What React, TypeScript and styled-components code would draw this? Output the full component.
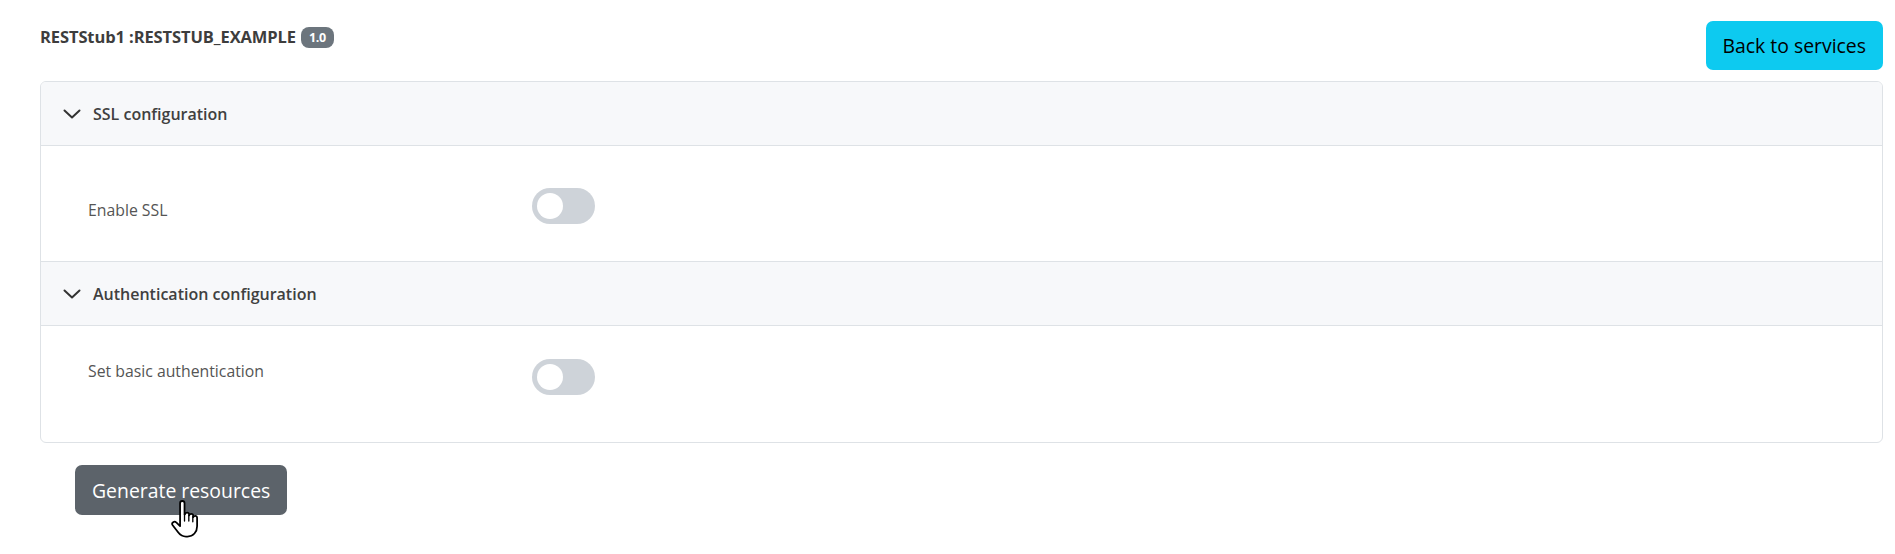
import styled, { createGlobalStyle } from "styled-components";

const GlobalStyle = createGlobalStyle`
  html, body {
    margin: 0;
    padding: 0;
    background: #ffffff;
  }
  body {
    font-family: "Open Sans", "Noto Sans", Arial, sans-serif;
    color: #444;
  }
`;

const Page = styled.div`
  width: 1895px;
  min-height: 554px;
  box-sizing: border-box;
  padding: 21px 12px 0 40px;
`;

const TopBar = styled.div`
  display: flex;
  justify-content: space-between;
  align-items: flex-start;
`;

const Title = styled.h1`
  display: flex;
  align-items: center;
  gap: 5px;
  margin: 4px 0 0 0;
  font-size: 16.5px;
  font-weight: 700;
  line-height: 22px;
  color: #3d3d3d;
  letter-spacing: -0.1px;
`;

const Badge = styled.span`
  display: inline-flex;
  align-items: center;
  justify-content: center;
  height: 21px;
  padding: 0 8px;
  border-radius: 8px;
  background: #6c757d;
  color: #ffffff;
  font-size: 12.5px;
  font-weight: 700;
  margin-top: 2px;
  letter-spacing: -0.3px;
`;

const Button = styled.button<{ $variant: "info" | "secondary" }>`
  display: inline-flex;
  align-items: center;
  justify-content: center;
  height: ${({ $variant }) => ($variant === "info" ? "49px" : "50px")};
  padding: 0 17px;
  border: none;
  border-radius: 7px;
  font-family: "Open Sans", "Noto Sans", Arial, sans-serif;
  font-size: 19.4px;
  font-weight: 400;
  cursor: pointer;
  background: ${({ $variant }) => ($variant === "info" ? "#0dcaf0" : "#5c636a")};
  color: ${({ $variant }) => ($variant === "info" ? "#000000" : "#ffffff")};
`;

const Card = styled.div`
  margin-top: 11px;
  border: 1px solid #dee2e6;
  border-radius: 6px;
  overflow: hidden;
`;

const SectionHeader = styled.div`
  display: flex;
  align-items: center;
  gap: 12px;
  height: 63px;
  padding-left: 22px;
  background: #f7f8fa;
  border-bottom: 1px solid #dee2e6;
  font-size: 16px;
  font-weight: 600;
  color: #404040;
`;

const SectionBody = styled.div<{ $align: "center" | "start"; $last?: boolean }>`
  display: grid;
  grid-template-columns: 444px 63px;
  align-items: ${({ $align }) => ($align === "center" ? "center" : "start")};
  height: 116px;
  box-sizing: border-box;
  padding: ${({ $align }) => ($align === "center" ? "4px 0 0 47px" : "33px 0 0 47px")};
  border-bottom: ${({ $last }) => ($last ? "none" : "1px solid #dee2e6")};
`;

const Label = styled.span<{ $offset?: number }>`
  font-size: 15.8px;
  font-weight: 400;
  color: #555;
  line-height: 24px;
  padding-top: ${({ $offset }) => $offset ?? 0}px;
`;

const Track = styled.span`
  position: relative;
  display: block;
  width: 63px;
  height: 36px;
  border-radius: 18px;
  background: #ced3d9;
`;

const Knob = styled.span`
  position: absolute;
  left: 5px;
  top: 5px;
  width: 26px;
  height: 26px;
  border-radius: 50%;
  background: #ffffff;
`;

const Footer = styled.div`
  position: relative;
  display: flex;
  padding: 22px 0 40px 35px;
`;

const Pointer = styled.svg`
  position: absolute;
  left: 131px;
  top: 58px;
  z-index: 2;
  pointer-events: none;
  overflow: visible;
`;

function Chevron() {
  return (
    <svg width="18" height="10" viewBox="0 0 18 10" fill="none">
      <polyline
        points="1.5 1.5 9 8.5 16.5 1.5"
        stroke="#333"
        strokeWidth="2"
        strokeLinecap="round"
        strokeLinejoin="round"
      />
    </svg>
  );
}

function Toggle() {
  return (
    <Track>
      <Knob />
    </Track>
  );
}

export default function App() {
  return (
    <>
      <GlobalStyle />
      <Page>
        <TopBar>
          <Title>
            RESTStub1 :RESTSTUB_EXAMPLE <Badge>1.0</Badge>
          </Title>
          <Button $variant="info">Back to services</Button>
        </TopBar>

        <Card>
          <SectionHeader>
            <Chevron />
            SSL configuration
          </SectionHeader>
          <SectionBody $align="center">
            <Label $offset={8}>Enable SSL</Label>
            <Toggle />
          </SectionBody>

          <SectionHeader>
            <Chevron />
            Authentication configuration
          </SectionHeader>
          <SectionBody $align="start" $last>
            <Label>Set basic authentication</Label>
            <Toggle />
          </SectionBody>
        </Card>

        <Footer>
          <Button $variant="secondary">Generate resources</Button>
          <Pointer width="30" height="37" viewBox="0 0 20 25">
            <path
              d="M6 1.5c0-.8.7-1.5 1.5-1.5S9 .7 9 1.5V9h.3c.1-.7.7-1.2 1.4-1.2.8 0 1.4.6 1.4 1.4v.5c.2-.6.7-1 1.4-1 .8 0 1.4.6 1.4 1.4v.8c.2-.5.7-.9 1.3-.9.8 0 1.3.6 1.3 1.4V17c0 3.9-2.6 7-6.5 7h-1c-2.4 0-3.9-1-5.2-2.7L1 16.4c-.5-.7-.4-1.6.3-2.1.7-.5 1.6-.4 2.1.2L6 17V1.5z"
              fill="#ffffff"
              stroke="#000000"
              strokeWidth="1.2"
              strokeLinejoin="round"
            />
            <path d="M9 9v4.5M11.9 9.5v4M14.6 10.5v3.5" stroke="#000000" strokeWidth="0.9" strokeLinecap="round" />
          </Pointer>
        </Footer>
      </Page>
    </>
  );
}
